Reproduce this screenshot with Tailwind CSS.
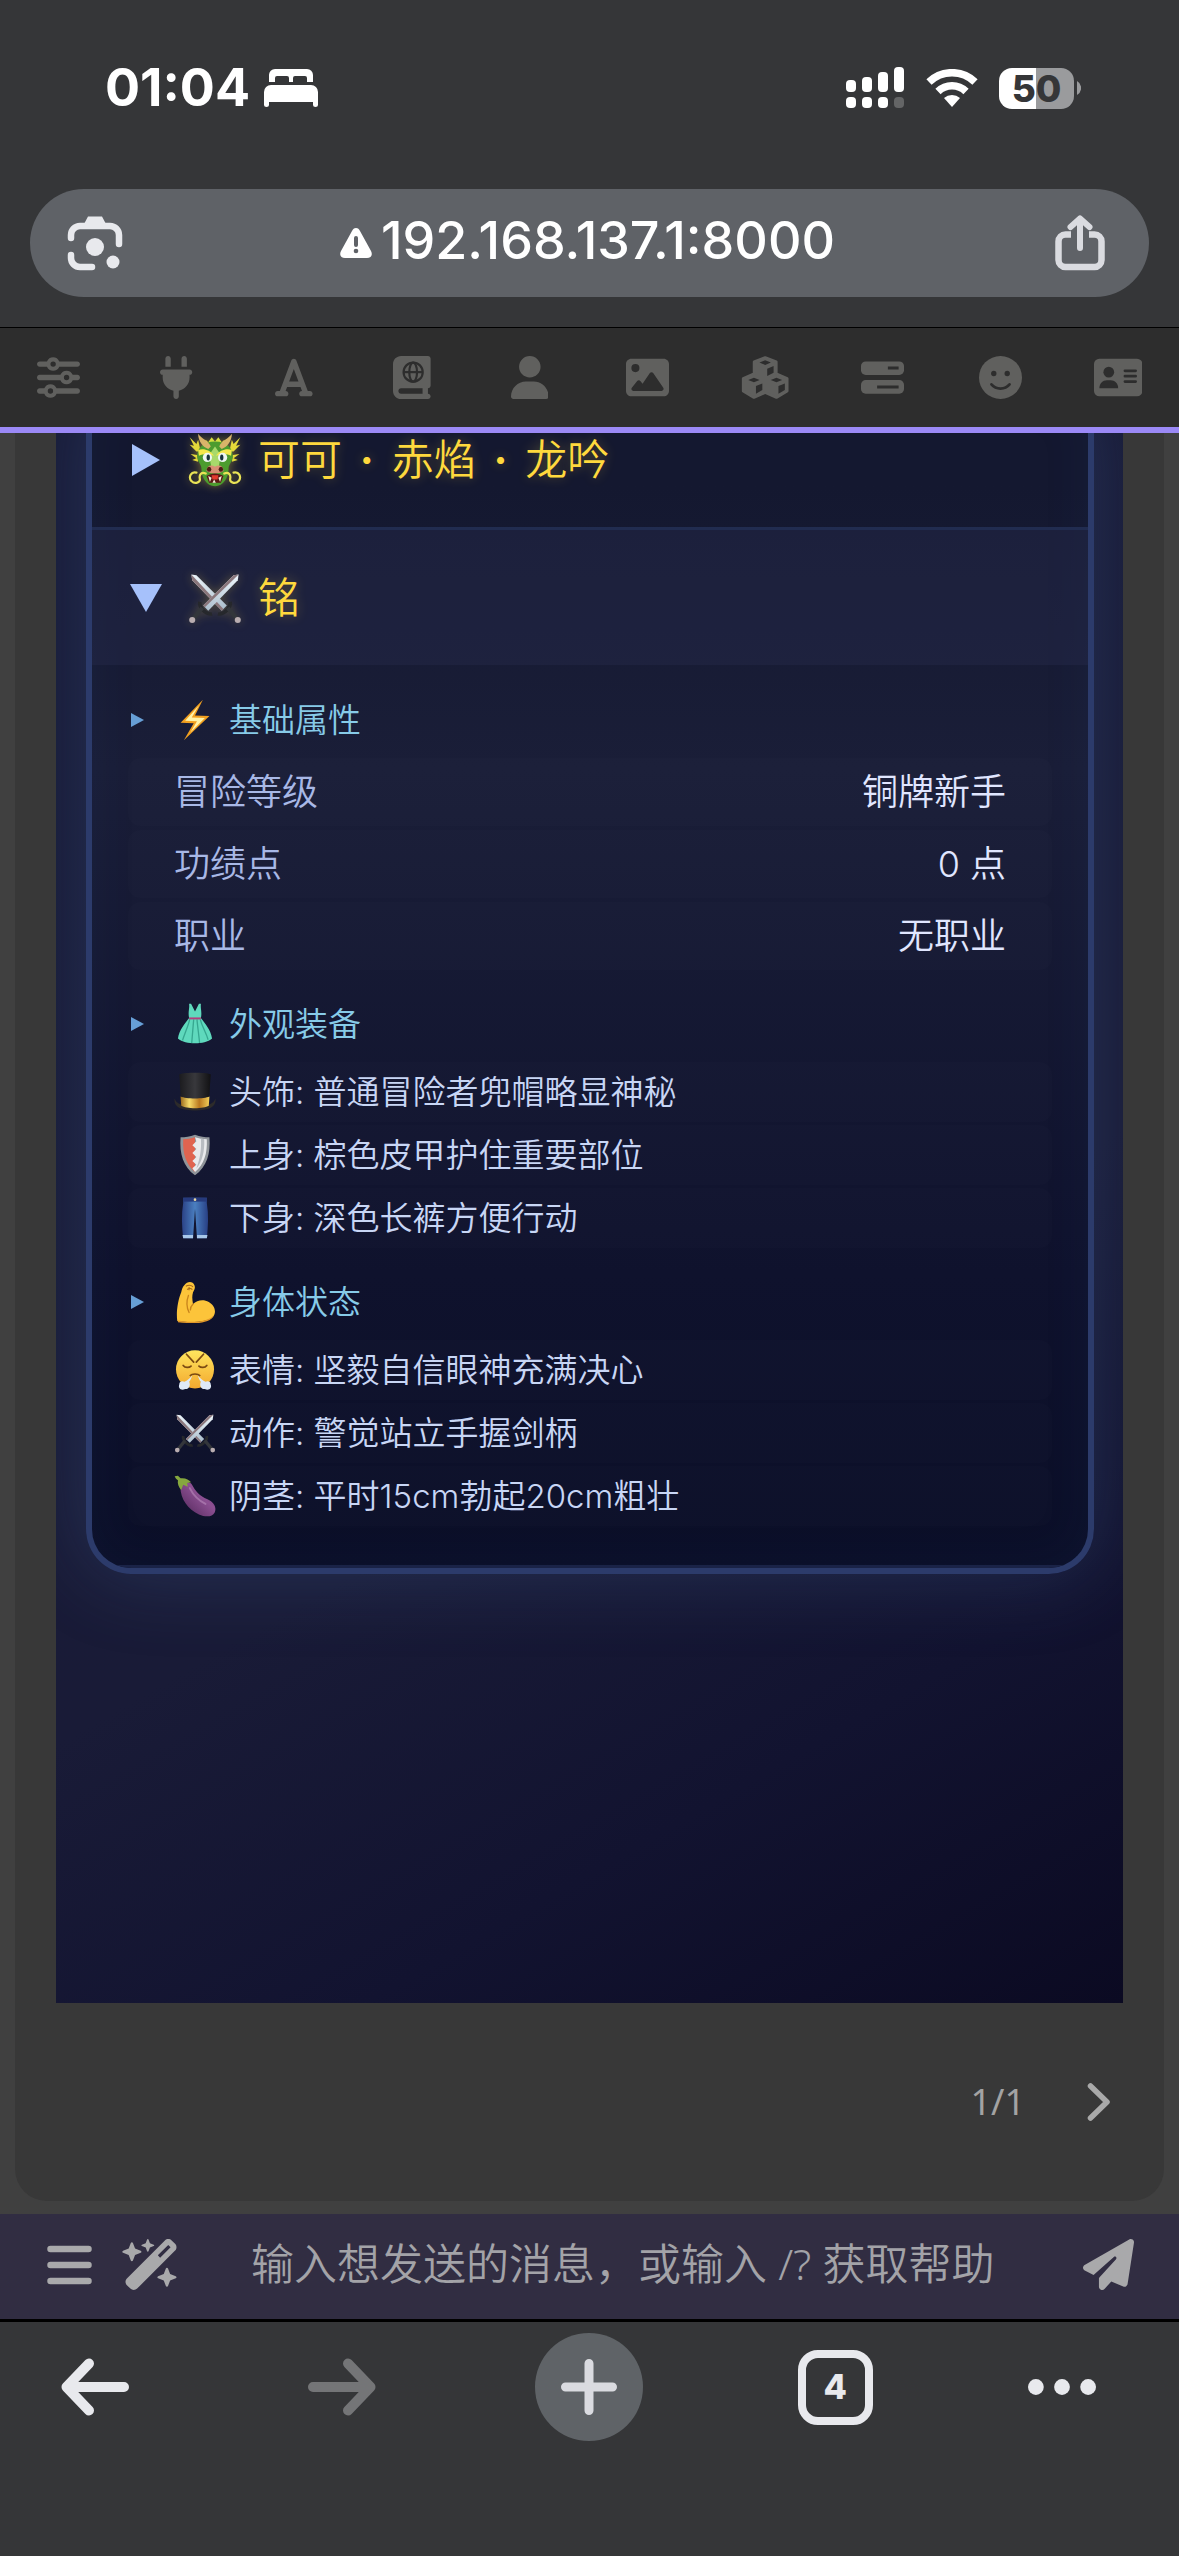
<!DOCTYPE html>
<html lang="zh-CN">
<head>
<meta charset="utf-8">
<meta name="viewport" content="width=device-width, initial-scale=1">
<title>192.168.137.1:8000</title>
<script src="https://cdn.jsdelivr.net/npm/@tailwindcss/browser@4"></script>
</head>
<body class="flex min-h-screen flex-col bg-[#353638] font-['Inter','Noto_Sans_CJK_SC',sans-serif]">

<!-- Shared emoji drawings -->
<svg class="absolute h-0 w-0" aria-hidden="true">
  <defs>
    <linearGradient id="blade" x1="0" y1="0" x2="1" y2="1"><stop offset="0" stop-color="#eef6fb"/><stop offset="1" stop-color="#a9bccb"/></linearGradient>
    <linearGradient id="gold" x1="0" x2="1"><stop offset="0" stop-color="#9a6a1c"/><stop offset=".3" stop-color="#f6dc6a"/><stop offset=".65" stop-color="#b9781f"/><stop offset="1" stop-color="#f1cf5a"/></linearGradient>
    <linearGradient id="hat" x1="0" x2="1"><stop offset="0" stop-color="#1b1b1e"/><stop offset=".5" stop-color="#38383c"/><stop offset="1" stop-color="#111113"/></linearGradient>
    <linearGradient id="face" x1="0" y1="0" x2="0" y2="1"><stop offset="0" stop-color="#ffe55e"/><stop offset="1" stop-color="#f3a92f"/></linearGradient>
    <linearGradient id="denim" x1="0" x2="1"><stop offset="0" stop-color="#2b4286"/><stop offset=".5" stop-color="#4a7fc0"/><stop offset="1" stop-color="#283f84"/></linearGradient>
    <linearGradient id="plum" x1="0" y1="1" x2="1" y2="0"><stop offset="0" stop-color="#4d2455"/><stop offset=".6" stop-color="#8d5093"/><stop offset="1" stop-color="#643069"/></linearGradient>
  </defs>
  <symbol id="swords" viewBox="0 0 64 64">
    <g>
      <path d="M4 4 L10 5 L46 41 L40 47 L5 11Z" fill="url(#blade)"/>
      <path d="M4 4 L5 11 L40 47 L42 45Z" fill="#8a767b"/>
      <path d="M52 36c2 8-8 18-17 17l1-4c6 0 12-6 12-12z" fill="#26282c"/>
      <path d="M45 45l4-3 10 12-4 3z" fill="#33363b"/>
      <circle cx="59" cy="58" r="3.600" fill="#b9adb0"/>
    </g>
    <g transform="matrix(-1 0 0 1 64 0)">
      <path d="M4 4 L10 5 L46 41 L40 47 L5 11Z" fill="url(#blade)"/>
      <path d="M4 4 L10 5 L46 41 L44 43Z" fill="#8a767b"/>
      <path d="M52 36c2 8-8 18-17 17l1-4c6 0 12-6 12-12z" fill="#26282c"/>
      <path d="M45 45l4-3 10 12-4 3z" fill="#33363b"/>
      <circle cx="59" cy="58" r="3.600" fill="#b9adb0"/>
    </g>
  </symbol>
  <symbol id="dragon" viewBox="0 0 64 64">
    <path d="M10 22L2 14l5 1-5-10 8 8 2-5 3 14zM54 22l8-8-5 1 5-10-8 8-2-5-3 14zM12 34l-7-2 5-2-7-5 8 1zM52 34l7-2-5-2 7-5-8 1z" fill="#e4d93a"/>
    <path d="M18 16l3-8 3 3 4-6 4 5 4-5 4 6 3-3 3 8z" fill="#d9e043"/>
    <path d="M32 10c14 0 22 8 21 19-1 6-5 8-5 14 0 10-6 20-16 20s-16-10-16-20c0-6-4-8-5-14-1-11 7-19 21-19z" fill="#4c9c2f"/>
    <path d="M32 16l7 10-3 16h-8l-3-16z" fill="#a8d96b"/>
    <path d="M12 20c7-2 14 0 19 7-6-2-12-3-18 0zM52 20c-7-2-14 0-19 7 6-2 12-3 18 0z" fill="#f4e84c"/>
    <path d="M24 19C18 17 12 10 12 1c4 6 12 8 15 15zM40 19c6-2 12-9 12-18-4 6-12 8-15 15z" fill="#d9b46a"/>
    <circle cx="23" cy="29" r="5.500" fill="#eef7f2"/><circle cx="41" cy="29" r="5.500" fill="#eef7f2"/>
    <ellipse cx="24" cy="29" rx="2" ry="3.500" fill="#16323b"/><ellipse cx="40" cy="29" rx="2" ry="3.500" fill="#16323b"/>
    <path d="M22 45c0-6 5-8 10-5 5-3 10-1 10 5-5 4-15 4-20 0z" fill="#d98f73"/>
    <ellipse cx="25" cy="43" rx="2.600" ry="3" fill="#4b1d16"/><ellipse cx="39" cy="43" rx="2.600" ry="3" fill="#4b1d16"/>
    <path d="M22 51c6-4 14-4 20 0l-3 8H25z" fill="#5b1715"/><path d="M28 50h8l-1 5h-6z" fill="#e23b2e"/>
    <path d="M24 51l2 7 2-5zM40 51l-2 7-2-5zM29 59l2-4 2 4z" fill="#f7f0dc"/>
    <path d="M21 48c-5-2-8 1-7 6 1 5-6 7-10 3-4-5 0-12 6-10M43 48c5-2 8 1 7 6-1 5 6 7 10 3 4-5 0-12-6-10" fill="none" stroke="#e9e356" stroke-width="2.600" stroke-linecap="round"/>
  </symbol>
  <symbol id="bolt" viewBox="0 0 64 64">
    <path d="M44 1L10 36l20 1L15 63 54 26l-22-1z" fill="#f2a01f"/>
    <path d="M38 10L17 33l18 1-10 17 22-22-20-1z" fill="#fff3a6"/>
  </symbol>
  <symbol id="dress" viewBox="0 0 64 64">
    <path d="M23 1l3 0 6 12 6-12 3 0c-1 9 2 12 0 22 6 8 15 18 17 31-12 10-40 10-52 0 2-13 11-23 17-31-2-10 1-13 0-22z" fill="#5fd9bd"/>
    <path d="M24 25c-3 12-8 22-11 32M30 25c-1 12-2 24-3 36M35 25c1 12 3 24 4 36M40 25c3 12 9 20 12 31" stroke="#36a790" stroke-width="2" fill="none"/>
    <path d="M23 22h18v3H23z" fill="#b53c7c"/>
  </symbol>
  <symbol id="tophat" viewBox="0 0 64 64">
    <path d="M1 42c2 8 12 12 31 12s29-4 31-12c2 12-8 18-31 18S-1 54 1 42z" fill="#2d2b2a"/>
    <path d="M8 5c10-3 38-3 48 0l-3 44c-8 5-34 5-42 0z" fill="url(#hat)"/>
    <path d="M10 39c8 4 36 4 44 0l-1 14c-8 5-34 5-42 0z" fill="url(#gold)"/>
  </symbol>
  <symbol id="shield" viewBox="0 0 64 64">
    <path d="M32 1c8 3 15 4 22 4 2 25-4 45-22 58C14 50 8 30 10 5c7 0 14-1 22-4z" fill="#8f9499"/>
    <path d="M32 5c-6 2-12 3-18 3-1 22 4 38 18 50z" fill="#e0644f"/>
    <path d="M32 5c6 2 12 3 18 3 1 22-4 38-18 50l-4-6 6-5-6-6 6-6-6-6 6-6-6-6 6-6z" fill="#e9eaec"/>
    <path d="M41 7l5 1c1 18-3 34-12 45 6-16 8-30 7-46z" fill="#b9bdc2"/>
  </symbol>
  <symbol id="jeans" viewBox="0 0 64 64">
    <path d="M14 1h36v8c3 18 2 36 0 54H35L32 18l-3 45H14c-2-18-3-36 0-54z" fill="url(#denim)"/>
    <path d="M14 1h36v6H14z" fill="#263a7c"/><circle cx="32" cy="4" r="2" fill="#ead9a2"/>
    <path d="M13 58h16v5H14zM35 58h16l-1 5H35z" fill="#a8c8ea"/>
  </symbol>
  <symbol id="muscle" viewBox="0 0 64 64">
    <path d="M16 6c4-6 13-6 15 0 2 4 0 8-2 11-2 7-1 12 0 18 6-6 16-8 24-3 9 5 12 15 7 22-7 9-35 10-55 7-2-14 1-32 6-44 1-4 2-8 5-11z" fill="#fcc43a"/>
    <path d="M22 22c-3 8-3 18 1 26M29 35c-3 3-4 6-4 9" stroke="#c8841c" stroke-width="2" fill="none" stroke-linecap="round"/>
    <path d="M6 60c20 4 48 2 54-8-3 14-34 13-54 11z" fill="#e0972a"/>
    <path d="M18 8c4-2 8-2 11 1M20 13c3-2 6-2 8 0M23 9v5" stroke="#a8681a" stroke-width="1.600" fill="none"/>
  </symbol>
  <symbol id="huff" viewBox="0 0 64 64">
    <circle cx="32" cy="31" r="29" fill="url(#face)"/>
    <path d="M19 8l11 12M45 8L34 20M14 25c3 4 9 4 12 1M38 26c3 3 9 3 12-1" stroke="#7b4a12" stroke-width="2.600" fill="none" stroke-linecap="round"/>
    <path d="M24 41c4-4 12-4 16 0" stroke="#7b4a12" stroke-width="2.400" fill="none"/>
    <path d="M28 40c-2 5-3 8-5 10 3 6-1 12-6 11-7 3-11-2-9-7 0-5 5-6 8-4 4-2 8-5 12-10zM36 40c2 5 3 8 5 10-3 6 1 12 6 11 7 3 11-2 9-7 0-5-5-6-8-4-4-2-8-5-12-10z" fill="#dfe9f8"/>
  </symbol>
  <symbol id="eggplant" viewBox="0 0 64 64">
    <path d="M10 14c6-4 14-4 17 0 6 11 12 18 24 23 11 5 14 13 11 20-4 8-15 7-24 3C20 52 8 34 10 14z" fill="url(#plum)"/>
    <path d="M24 20c5 10 12 18 24 24" stroke="#b98abd" stroke-width="3" fill="none" stroke-linecap="round" opacity=".6"/>
    <path d="M1 2l5-1 4 4c7-1 13 2 16 6l-6 1 1 6-7-3-3 8c-4-5-6-10-5-15-2-1-4-3-5-6z" fill="#86a83f"/>
  </symbol>
  <symbol id="caret" viewBox="0 0 13 14"><path d="M0 0l13 7L0 14z" fill="currentColor"/></symbol>
</svg>

<header>
  <div class="flex h-44 items-center justify-between pl-[105px] pr-[98px]">
    <div class="flex items-center gap-[14px]">
      <span class="text-[52px] leading-none font-bold text-white">01:04</span>
      <svg class="h-[38px] w-[54px]" viewBox="0 0 54 38" fill="#fff" aria-label="睡眠模式">
        <path d="M5 13V6a6 6 0 0 1 6-6h32a6 6 0 0 1 6 6v7h-6V9a2 2 0 0 0-2-2H31a2 2 0 0 0-2 2v4h-4V9a2 2 0 0 0-2-2H13a2 2 0 0 0-2 2v4z"/>
        <path d="M0 23a7 7 0 0 1 7-7h40a7 7 0 0 1 7 7v13a2.500 2 0 0 1-5 0v-3H5v3a2.500 2 0 0 1-5 0z"/>
      </svg>
    </div>
    <div class="flex items-center">
      <svg class="h-[42px] w-[58px]" viewBox="0 0 58 42" fill="#fff" aria-label="信号">
        <rect x="0" y="13" width="10" height="12" rx="4"/><rect x="16" y="10" width="10" height="15" rx="4"/><rect x="32" y="5" width="10" height="20" rx="4"/><rect x="48" y="0" width="10" height="25" rx="4"/>
        <rect x="0" y="30" width="10" height="11" rx="4"/><rect x="16" y="30" width="10" height="11" rx="4"/><rect x="32" y="30" width="10" height="11" rx="4"/><rect x="48" y="30" width="10" height="11" rx="4" fill="#646566"/>
      </svg>
      <svg class="ml-[22px] h-[38px] w-[52px]" viewBox="0 0 52 38" aria-label="无线网络">
        <path d="M3 13a33 33 0 0 1 46 0M12 22.500a20 20 0 0 1 28 0" fill="none" stroke="#fff" stroke-width="7.500"/>
        <path d="M26 38l-8-9a12 12 0 0 1 16 0z" fill="#fff"/>
      </svg>
      <span class="ml-[21px] flex h-[41px] w-[75px] items-center justify-center rounded-[13px] bg-[linear-gradient(90deg,#fff_50%,#9a9b9d_50%)] text-[37px] leading-none font-extrabold text-[#353638]">50</span>
      <svg class="ml-[3px] h-[14px] w-1" viewBox="0 0 4 14"><path d="M0 0a8 8 0 0 1 0 14z" fill="#9a9b9d"/></svg>
    </div>
  </div>
  <div class="px-[30px] pt-[13px] pb-[30px]">
    <div class="flex h-[108px] items-center justify-between rounded-full bg-[#5f6267] pr-[41px] pl-[37px]">
      <button class="flex" aria-label="智能镜头">
        <svg class="h-14 w-14" viewBox="0 0 56 56" fill="none" stroke="#e8e9ed" stroke-width="6.500" stroke-linecap="round">
          <path d="M4 23v-3A9 9 0 0 1 13 11h30a9 9 0 0 1 9 9v9M4 40v3a9 9 0 0 0 9 9h12"/>
          <path d="M17 9l4-7.500h14L39 9z" fill="#e8e9ed" stroke="none"/>
          <circle cx="28" cy="32" r="9" fill="#e8e9ed" stroke="none"/><circle cx="46" cy="47" r="6.500" fill="#e8e9ed" stroke="none"/>
        </svg>
      </button>
      <button class="flex items-center gap-[9px] pb-1">
        <svg class="mt-1 h-[30px] w-8" viewBox="0 0 32 30"><path d="M16 0c2 0 3 1 4 3l11 20c2 4 0 7-4 7H5c-4 0-6-3-4-7L12 3c1-2 2-3 4-3z" fill="#fff"/><path d="M16 10v7" stroke="#5f6267" stroke-width="4" stroke-linecap="round"/><circle cx="16" cy="23" r="2.300" fill="#5f6267"/></svg>
        <span class="text-[52px] leading-none font-medium text-white">192.168.137.1:8000</span>
      </button>
      <button class="flex" aria-label="分享">
        <svg class="h-14 w-14" viewBox="0 0 56 56" fill="none" stroke="#dadbe0" stroke-width="6.500" stroke-linecap="round" stroke-linejoin="round">
          <path d="M19 19.500h-5.500a7 7 0 0 0-7 7V45a7 7 0 0 0 7 7h29a7 7 0 0 0 7-7V26.500a7 7 0 0 0-7-7H37" stroke-linecap="butt"/>
          <path d="M28 33V4M18.500 12L28 3.500 37.500 12" stroke-width="6"/>
        </svg>
      </button>
    </div>
  </div>
</header>

<nav class="grid h-[106px] grid-cols-10 items-center border-t border-b-[6px] border-t-black border-b-[#9b89f6] bg-[#2d2d2d] pr-[2px] text-[#60605e] *:flex *:justify-center">
  <button aria-label="AI 设置"><svg class="h-[43px]" viewBox="0 0 512 512" fill="currentColor"><path d="M0 416c0 17.700 14.300 32 32 32l54.700 0c12.300 28.300 40.500 48 73.300 48s61-19.700 73.300-48L480 448c17.700 0 32-14.300 32-32s-14.300-32-32-32l-246.700 0c-12.300-28.300-40.500-48-73.300-48s-61 19.700-73.300 48L32 384c-17.700 0-32 14.300-32 32zm128 0a32 32 0 1 1 64 0 32 32 0 1 1 -64 0zM320 256a32 32 0 1 1 64 0 32 32 0 1 1 -64 0zm32-80c-32.800 0-61 19.700-73.300 48L32 224c-17.700 0-32 14.300-32 32s14.300 32 32 32l246.700 0c12.300 28.300 40.500 48 73.300 48s61-19.700 73.300-48l54.700 0c17.700 0 32-14.300 32-32s-14.300-32-32-32l-54.700 0c-12.300-28.300-40.500-48-73.300-48zM192 128a32 32 0 1 1 0-64 32 32 0 1 1 0 64zm73.300-64C253 35.700 224.800 16 192 16s-61 19.700-73.300 48L32 64C14.300 64 0 78.300 0 96s14.300 32 32 32l86.700 0c12.300 28.300 40.500 48 73.300 48s61-19.700 73.300-48L480 128c17.700 0 32-14.300 32-32s-14.300-32-32-32L265.300 64z"/></svg></button>
  <button aria-label="API 连接"><svg class="h-[43px]" viewBox="0 0 384 512" fill="currentColor"><path d="M96 0C78.300 0 64 14.300 64 32v96h64V32c0-17.700-14.300-32-32-32zM288 0c-17.700 0-32 14.300-32 32v96h64V32c0-17.700-14.300-32-32-32zM32 160c-17.700 0-32 14.300-32 32s14.300 32 32 32v32c0 77.400 55 142 128 156.800V480c0 17.700 14.300 32 32 32s32-14.300 32-32V412.800C297 398 352 333.400 352 256V224c17.700 0 32-14.300 32-32s-14.300-32-32-32H32z"/></svg></button>
  <button aria-label="格式"><svg class="h-[43px]" viewBox="0 0 448 512" fill="currentColor"><path d="M254 52.800C249.300 40.300 237.300 32 224 32s-25.300 8.300-30 20.800L57.800 416H32c-17.700 0-32 14.300-32 32s14.300 32 32 32h96c17.700 0 32-14.300 32-32s-14.300-32-32-32h-1.800l18-48H303.800l18 48H320c-17.700 0-32 14.300-32 32s14.300 32 32 32h96c17.700 0 32-14.300 32-32s-14.300-32-32-32H390.200L254 52.800zM279.800 304H168.200L224 155.100 279.800 304z"/></svg></button>
  <button aria-label="世界书"><svg class="h-[43px]" viewBox="0 0 448 512" fill="currentColor"><path d="M0 96C0 43 43 0 96 0H384h32c17.700 0 32 14.300 32 32V352c0 17.700-14.300 32-32 32v64c17.700 0 32 14.300 32 32s-14.300 32-32 32H384 96c-53 0-96-43-96-96V96zM64 416c0 17.700 14.300 32 32 32H352V384H96c-17.700 0-32 14.300-32 32z"/><g fill="none" stroke="#2d2d2d" stroke-width="26"><circle cx="240" cy="192" r="114"/><ellipse cx="240" cy="192" rx="46" ry="114"/><path d="M126 192h228"/></g></svg></button>
  <button aria-label="用户"><svg class="h-[43px]" viewBox="0 0 448 512" fill="currentColor"><path d="M224 256A128 128 0 1 0 224 0a128 128 0 1 0 0 256zm-45.700 48C79.800 304 0 383.800 0 482.300C0 498.700 13.300 512 29.700 512H418.300c16.400 0 29.700-13.300 29.700-29.700C448 383.800 368.200 304 269.700 304H178.300z"/></svg></button>
  <button aria-label="背景"><svg class="h-[43px]" viewBox="0 0 512 512" fill="currentColor"><path d="M0 96C0 60.700 28.700 32 64 32H448c35.300 0 64 28.700 64 64V416c0 35.300-28.700 64-64 64H64c-35.300 0-64-28.700-64-64V96zM323.800 202.500c-4.500-6.600-11.900-10.500-19.800-10.500s-15.400 3.900-19.800 10.500l-87 127.600L170.700 297c-4.600-5.700-11.500-9-18.700-9s-14.200 3.300-18.700 9l-64 80c-5.800 7.200-6.900 17.100-2.900 25.400s12.400 13.600 21.600 13.600h96 32H424c8.900 0 17.100-4.900 21.200-12.800s3.600-17.400-1.400-24.700l-120-176zM112 192a48 48 0 1 0 0-96 48 48 0 1 0 0 96z"/></svg></button>
  <button aria-label="扩展"><svg class="h-[43px]" viewBox="0 0 576 512" fill="currentColor">
    <path stroke="currentColor" stroke-width="32" stroke-linejoin="round" d="M288 18l132 50v142l130 58v150l-128 76-134-58-134 58-128-76V268l130-58V68z"/>
    <path fill="#2d2d2d" d="M288 52l68 26-68 28-68-28zM312 152l76-34v82l-76 38zM154 258l68 28-68 26-68-26zM422 258l68 28-68 26-68-26zM178 358l76-32v80l-76 42zM446 358l76-32v80l-76 42z"/></svg></button>
  <button aria-label="服务器"><svg class="h-[43px]" viewBox="0 0 512 512" fill="currentColor"><rect y="64" width="512" height="162" rx="56"/><rect y="286" width="512" height="162" rx="56"/><path d="M320 144h128M192 368h256" stroke="#2d2d2d" stroke-width="36"/></svg></button>
  <button aria-label="角色"><svg class="h-[43px]" viewBox="0 0 512 512" fill="currentColor"><circle cx="256" cy="256" r="256"/><circle cx="176" cy="208" r="32" fill="#2d2d2d"/><circle cx="336" cy="208" r="32" fill="#2d2d2d"/><path d="M148 338c54 66 162 66 216 0" fill="none" stroke="#2d2d2d" stroke-width="32" stroke-linecap="round"/></svg></button>
  <button aria-label="角色卡"><svg class="h-[43px]" viewBox="0 0 576 512" fill="currentColor"><rect y="32" width="576" height="448" rx="64"/><g fill="#2d2d2d"><circle cx="176" cy="192" r="64"/><path d="M64 384c0-60 40-96 90-96h44c50 0 90 36 90 96z"/></g><path d="M368 176h128M368 240h128M368 304h128" stroke="#2d2d2d" stroke-width="32" stroke-linecap="round"/></svg></button>
</nav>

<main class="flex-1 overflow-hidden bg-[#404040] px-[15px] pb-[13px]">
  <article class="rounded-b-[32px] bg-[#383838] px-[41px]">
    <div class="overflow-hidden bg-[linear-gradient(150deg,#181b38_0%,#191b37_60%,#121330_80%,#0b0a22_100%)] pr-[29px] pb-[429px] pl-[30px]">
      <section class="-mt-[41px] overflow-hidden rounded-b-[45px] border-6 border-t-0 border-[#2c3b6b] bg-[linear-gradient(180deg,#141830_8%,#1a1e38_32%,#0f122d_75%,#0b0f28_100%)] font-[350] shadow-[0_0_80px_rgba(74,111,165,0.28),inset_0_0_50px_rgba(50,90,150,0.08)]">

        <details class="border-b-[3px] border-[#212c50]">
          <summary class="flex h-[135px] list-none items-center pr-9 pl-10 text-[42px] leading-none text-[#ffd93d] text-shadow-[0_0_12px_rgba(255,217,61,0.3)]">
            <svg class="mr-7 h-8 w-7 text-[#a6c1fb]" viewBox="0 0 28 32" fill="currentColor"><path d="M0 0l28 16L0 32z"/></svg>
            <svg class="mr-4 size-[54px] drop-shadow-[0_0_5px_rgba(255,217,61,0.4)]"><use href="#dragon"/></svg>
            <span>可可 <span class="px-[6px] font-bold">·</span> 赤焰 <span class="px-[6px] font-bold">·</span> 龙吟</span>
          </summary>
        </details>

        <details open class="border-b-[3px] border-[#1a2347]">
          <summary class="flex h-[135px] list-none items-center bg-[#242848]/50 pr-9 pl-[38px] text-[42px] leading-none text-[#ffd93d] text-shadow-[0_0_12px_rgba(255,217,61,0.3)]">
            <svg class="mr-[26px] h-7 w-8 text-[#a6c1fb]" viewBox="0 0 32 28" fill="currentColor"><path d="M0 0h32L16 28z"/></svg>
            <svg class="mr-4 size-[54px] drop-shadow-[0_0_5px_rgba(255,217,61,0.25)]"><use href="#swords"/></svg>
            <span>铭</span>
          </summary>

          <div class="flex flex-col gap-4 px-9 pt-[17px] pb-[39px]">
            <details open>
              <summary class="flex h-[76px] list-none items-center pl-[3px] text-[33px] leading-none text-[#87cbe8]">
                <svg class="mr-[30px] h-[14px] w-[13px] text-[#679fd6]"><use href="#caret"/></svg>
                <svg class="mr-[13px] size-[42px]"><use href="#bolt"/></svg>
                <span>基础属性</span>
              </summary>
              <dl class="flex flex-col gap-1 text-[36px] leading-none *:flex *:h-[68px] *:items-center *:justify-between *:rounded-xl *:bg-white/1 *:px-[46px]">
                <div><dt class="text-[#a8b8e6]">冒险等级</dt><dd class="text-[#e0e6ff]">铜牌新手</dd></div>
                <div><dt class="text-[#a8b8e6]">功绩点</dt><dd class="text-[#e0e6ff]">0 点</dd></div>
                <div><dt class="text-[#a8b8e6]">职业</dt><dd class="text-[#e0e6ff]">无职业</dd></div>
              </dl>
            </details>

            <details open>
              <summary class="flex h-[76px] list-none items-center pl-[3px] text-[33px] leading-none text-[#87cbe8]">
                <svg class="mr-[30px] h-[14px] w-[13px] text-[#679fd6]"><use href="#caret"/></svg>
                <svg class="mr-[13px] size-[42px]"><use href="#dress"/></svg>
                <span>外观装备</span>
              </summary>
              <ul class="flex flex-col gap-[3px] text-[33px] leading-none text-[#c8d6f5] *:flex *:h-[60px] *:items-center *:gap-[13px] *:rounded-xl *:bg-white/1 *:px-[46px]">
                <li><svg class="size-[42px]"><use href="#tophat"/></svg><span>头饰: 普通冒险者兜帽略显神秘</span></li>
                <li><svg class="size-[42px]"><use href="#shield"/></svg><span>上身: 棕色皮甲护住重要部位</span></li>
                <li><svg class="size-[42px]"><use href="#jeans"/></svg><span>下身: 深色长裤方便行动</span></li>
              </ul>
            </details>

            <details open>
              <summary class="flex h-[76px] list-none items-center pl-[3px] text-[33px] leading-none text-[#87cbe8]">
                <svg class="mr-[30px] h-[14px] w-[13px] text-[#679fd6]"><use href="#caret"/></svg>
                <svg class="mr-[13px] size-[42px]"><use href="#muscle"/></svg>
                <span>身体状态</span>
              </summary>
              <ul class="flex flex-col gap-[3px] text-[33px] leading-none text-[#c8d6f5] *:flex *:h-[60px] *:items-center *:gap-[13px] *:rounded-xl *:bg-white/1 *:px-[46px]">
                <li><svg class="size-[42px]"><use href="#huff"/></svg><span>表情: 坚毅自信眼神充满决心</span></li>
                <li><svg class="size-[42px]"><use href="#swords"/></svg><span>动作: 警觉站立手握剑柄</span></li>
                <li><svg class="size-[42px]"><use href="#eggplant"/></svg><span>阴茎: 平时15cm勃起20cm粗壮</span></li>
              </ul>
            </details>
          </div>
        </details>
      </section>
    </div>

    <div class="flex h-[198px] items-center justify-end gap-[62px] pr-[13px]">
      <span class="font-['Noto_Sans',sans-serif] text-[36px] leading-none text-[#a3a3a3]">1/1</span>
      <button class="flex" aria-label="下一条">
        <svg class="h-10 w-[23px]" viewBox="0 0 23 40" fill="none" stroke="#a9a9a9" stroke-width="5.500" stroke-linecap="round" stroke-linejoin="round"><path d="M3.500 4L20 20 3.500 36"/></svg>
      </button>
    </div>
  </article>
</main>

<form class="flex h-[108px] items-center border-b-[3px] border-black bg-[#312d42] pr-[45px] pb-1 pl-[47px] text-[#a9a9ab]">
  <button type="button" class="flex" aria-label="菜单"><svg class="h-10 w-[45px]" viewBox="0 0 45 40" stroke="currentColor" stroke-width="6.500" stroke-linecap="round"><path d="M3.500 4h38M3.500 20h38M3.500 36h38"/></svg></button>
  <button type="button" class="ml-[30px] flex" aria-label="扩展工具"><svg class="h-[51px] w-[58px]" viewBox="0 0 576 512" fill="currentColor"><path d="M234.700 42.700L197 56.800c-3 1.100-5 4-5 7.200s2 6.100 5 7.200l37.700 14.100L248.800 123c1.100 3 4 5 7.200 5s6.100-2 7.200-5l14.100-37.700L315 71.200c3-1.100 5-4 5-7.200s-2-6.100-5-7.200L277.300 42.700 263.200 5c-1.100-3-4-5-7.200-5s-6.100 2-7.200 5L234.700 42.700zM46.100 395.400c-18.700 18.700-18.700 49.100 0 67.900l34.600 34.600c18.700 18.700 49.100 18.700 67.900 0L529.900 116.500c18.700-18.700 18.700-49.100 0-67.900L495.300 14.100c-18.700-18.700-49.100-18.700-67.900 0L46.100 395.400zM484.600 82.600l-105 105-23.300-23.300 105-105 23.300 23.300zM7.500 117.200C3 118.900 0 123.200 0 128s3 9.100 7.500 10.800L64 160l21.200 56.500c1.700 4.500 6 7.500 10.800 7.500s9.100-3 10.800-7.500L128 160l56.500-21.200c4.500-1.700 7.500-6 7.500-10.800s-3-9.100-7.500-10.800L128 96 106.800 39.500C105.100 35 100.800 32 96 32s-9.100 3-10.800 7.500L64 96 7.500 117.200zm352 256c-4.500 1.700-7.500 6-7.500 10.800s3 9.100 7.500 10.800L416 416l21.200 56.500c1.700 4.500 6 7.500 10.800 7.500s9.100-3 10.800-7.500L480 416l56.500-21.200c4.500-1.700 7.500-6 7.500-10.800s-3-9.100-7.500-10.800L480 352l-21.200-56.500c-1.700-4.500-6-7.500-10.800-7.500s-9.100 3-10.800 7.500L416 352l-56.500 21.200z"/></svg></button>
  <input type="text" aria-label="消息" placeholder="输入想发送的消息，或输入 /? 获取帮助" class="mx-[71px] h-16 min-w-0 flex-1 bg-transparent font-['Noto_Sans','Noto_Sans_CJK_SC',sans-serif] text-[43px] font-[350] outline-none placeholder:text-[#a3a3a8]">
  <button class="flex" aria-label="发送"><svg class="size-[51px]" viewBox="0 0 512 512" fill="currentColor"><path d="M498.100 5.600c10.100 7 15.400 19.100 13.500 31.200l-64 416c-1.500 9.700-7.400 18.200-16 23s-18.900 5.400-28 1.600L284 427.700l-68.500 74.100c-8.900 9.700-22.900 12.900-35.200 8.100S160 493.200 160 480V396.400c0-4 1.500-7.800 4.200-10.700L331.800 202.800c5.800-6.300 5.600-16-.4-22s-15.700-6.400-22-.7L106 360.800 17.700 316.600C7.100 311.300 .3 300.700 0 288.900s5.900-22.800 16.100-28.700l448-256c10.700-6.100 23.900-5.500 34 1.400z"/></svg></button>
</form>

<footer class="flex h-[234px] justify-between pt-[11px] pr-[83px] pl-[41px]">
  <button class="flex h-[108px] w-[108px] items-center justify-center" aria-label="后退"><svg class="h-[58px] w-[69px]" viewBox="0 0 69 58" fill="none" stroke="#e8e9ed" stroke-width="10" stroke-linecap="round" stroke-linejoin="round"><path d="M63 29H6M28 5.500L5.500 29 28 52.500"/></svg></button>
  <button class="flex h-[108px] w-[108px] items-center justify-center" aria-label="前进" disabled><svg class="h-[58px] w-[69px]" viewBox="0 0 69 58" fill="none" stroke="#747577" stroke-width="10" stroke-linecap="round" stroke-linejoin="round"><path d="M6 29h57.500M41 5.500L63.500 29 41 52.500"/></svg></button>
  <button class="flex h-[108px] w-[108px] items-center justify-center rounded-full bg-[#5f6367]" aria-label="新标签页"><svg class="size-[58px]" viewBox="0 0 58 58" fill="none" stroke="#dadbe0" stroke-width="9" stroke-linecap="round"><path d="M5.500 29h47M29 5.500v47"/></svg></button>
  <button class="flex h-[108px] w-[108px] items-center justify-center" aria-label="标签页"><span class="flex size-[75px] items-center justify-center rounded-[20px] border-8 border-[#e8e9ed] text-[34px] leading-none font-extrabold text-[#e8e9ed]">4</span></button>
  <button class="flex h-[108px] w-[68px] items-center justify-center" aria-label="更多"><svg class="h-4 w-[69px]" viewBox="0 0 69 16" fill="#e8e9ed"><circle cx="8" cy="8" r="8"/><circle cx="34.500" cy="8" r="8"/><circle cx="61" cy="8" r="8"/></svg></button>
</footer>
</body>
</html>
